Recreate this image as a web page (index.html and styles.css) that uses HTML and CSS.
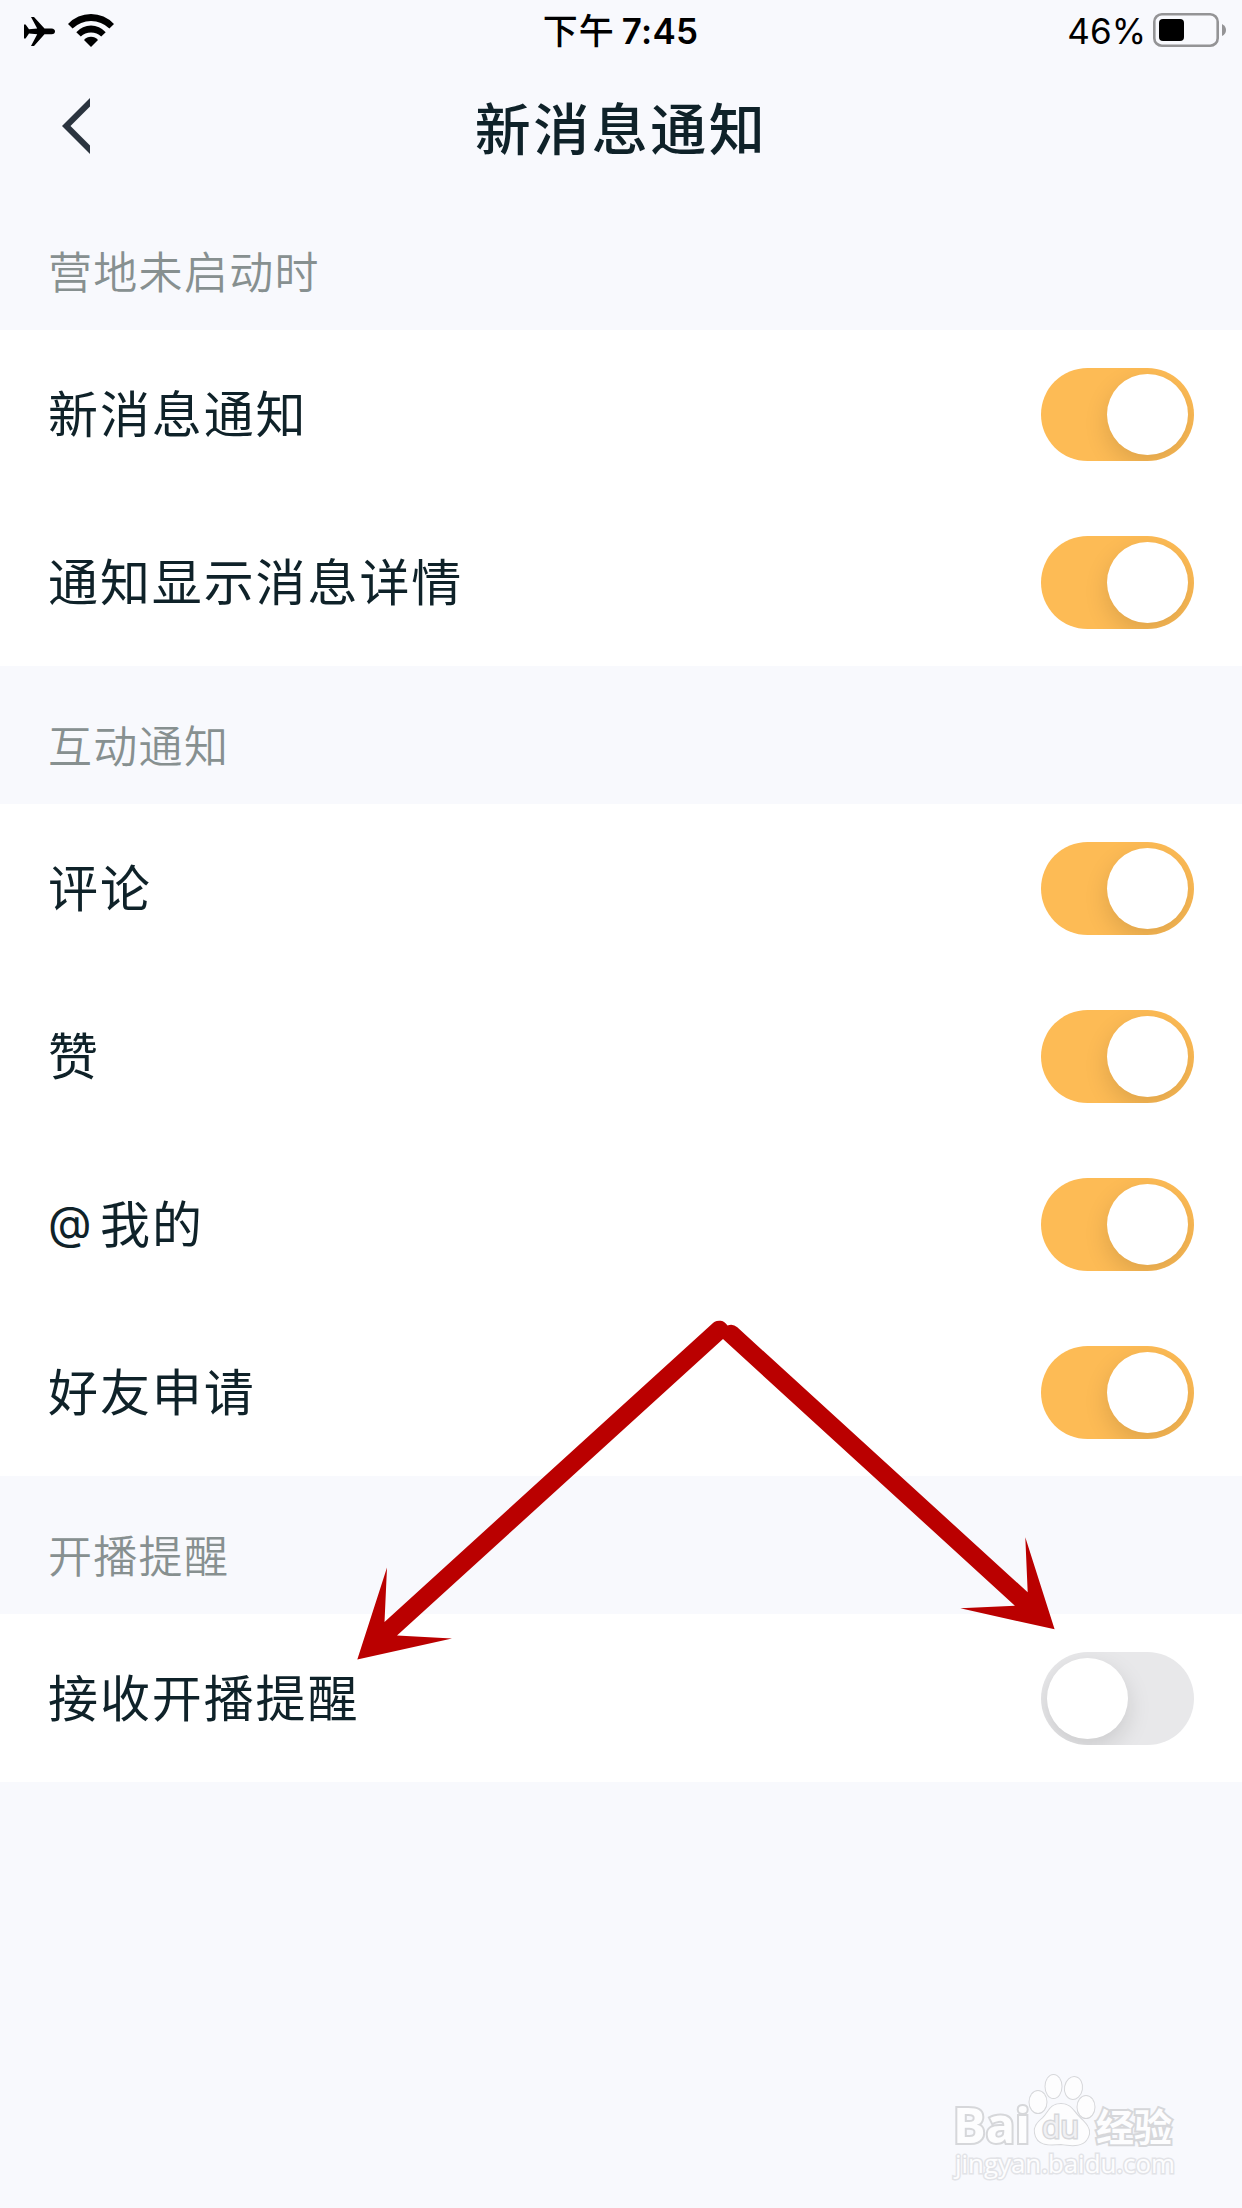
FILE: index.html
```html
<!DOCTYPE html>
<html lang="zh-CN">
<head>
<meta charset="utf-8">
<title>新消息通知</title>
<link rel="stylesheet" href="styles.css">
</head>
<body>
<div class="screen">
  <header class="status">
    <div class="status-left">
      <svg class="plane" viewBox="0 0 31 29"><path d="M0 7.500h1.600L5 12.300l8.200-.7L7 0h3L20.500 11.600h7Q31 12 31 14.400T27.500 17.200H20.500L10 29H7l6.200-11.700L5 16.500 1.600 21.500H0z"/></svg>
      <svg class="wifi" viewBox="0 0 46 33"><path d="M0 10Q9.500 0 23 0t23 10l-4.600 4.600Q33.500 7 23 7T4.600 14.600z"/><path d="M8.300 18.200Q14.500 11.500 23 11.500t14.700 6.700L33.200 22.600Q29 18.400 23 18.400t-10.200 4.200z"/><path d="M16 26q2.900-3.200 7-3.200t7 3.200l-7 7z"/></svg>
    </div>
    <div class="status-time"><span class="period">下午</span><span class="clock">7:45</span></div>
    <div class="status-right">
      <span class="percent">46%</span>
      <svg class="battery" viewBox="0 0 74 34"><rect x="1.300" y="1.300" width="63.400" height="31.400" rx="7.500" fill="none" stroke="#949496" stroke-width="2.600"/><rect x="6" y="6" width="25" height="22" rx="4"/><path d="M69 11q4 2 4 6t-4 6z" fill="#949496"/></svg>
    </div>
  </header>
  <nav class="navbar">
    <svg class="back" viewBox="0 0 28 56"><path d="M28 0v8.500L8.500 28 28 47.500V56L0 28z"/></svg>
    <h1 class="title">新消息通知</h1>
  </nav>
  <main>
    <h2 class="group-title">营地未启动时</h2>
    <section class="group">
      <div class="row"><span>新消息通知</span><i class="switch on"></i></div>
      <div class="row"><span>通知显示消息详情</span><i class="switch on"></i></div>
    </section>
    <h2 class="group-title">互动通知</h2>
    <section class="group">
      <div class="row"><span>评论</span><i class="switch on"></i></div>
      <div class="row"><span>赞</span><i class="switch on"></i></div>
      <div class="row"><span><b class="at">@</b>我的</span><i class="switch on"></i></div>
      <div class="row"><span>好友申请</span><i class="switch on"></i></div>
    </section>
    <h2 class="group-title">开播提醒</h2>
    <section class="group">
      <div class="row"><span>接收开播提醒</span><i class="switch"></i></div>
    </section>
  </main>
  <svg class="arrows" viewBox="350 1310 720 360">
    <path d="M713 1323A9.500 9.500 0 0 1 727.500 1325.500A9.500 9.500 0 0 1 737.300 1327.300L1027.700 1592.300 1025.300 1537.300 1054.600 1629.300 960.300 1608.300 1014.900 1605.700 723 1339 397 1635.500 452 1638.500 357.300 1659.500 387 1567.500 384.500 1622z"/>
  </svg>
  <svg class="watermark" viewBox="0 0 270 140">
    <g class="ink">
      <text class="brand" x="23" y="93" textLength="77" lengthAdjust="spacingAndGlyphs">Bai</text>
      <ellipse cx="108" cy="52" rx="8.500" ry="11"/>
      <ellipse cx="123.500" cy="36.500" rx="8" ry="11.500"/>
      <ellipse cx="143.500" cy="38" rx="8.500" ry="11" transform="rotate(10 143.500 38)"/>
      <ellipse cx="156" cy="57" rx="8.500" ry="11"/>
      <path d="M131 54c-11 0-12 8-18 14-6 5-9 9-8 15 2 13 15 12 26 11 12 2 25 3 28-10 1-7-5-12-10-17-6-6-8-13-18-13z"/>
      <text class="du" x="112" y="88" textLength="37" lengthAdjust="spacingAndGlyphs">du</text>
      <text class="cn" x="166" y="91" textLength="76" lengthAdjust="spacingAndGlyphs">经验</text>
      <text class="url" x="25" y="123" textLength="220" lengthAdjust="spacingAndGlyphs">jingyan.baidu.com</text>
    </g>
  </svg>
</div>
</body>
</html>
```
FILE: styles.css
```css
* { box-sizing: border-box; margin: 0; padding: 0; }
body { background: #f8f9fd; }
svg { display: block; }
.screen {
  position: relative;
  width: 1242px;
  height: 2208px;
  overflow: hidden;
  background: #f8f9fd;
  color: #0f2229;
  font-family: "Noto Sans CJK SC", sans-serif;
}
.status {
  display: grid;
  grid-template-columns: 1fr auto 1fr;
  align-items: center;
  height: 60px;
  padding: 0 15px 0 24px;
  color: #000;
}
.status-left { display: flex; align-items: center; gap: 13px; }
.plane { width: 31px; height: 29px; margin-top: 3px; }
.wifi { width: 46px; height: 33px; }
.status-time { display: flex; align-items: center; gap: 7px; padding-right: 10px; height: 60px; line-height: 57px; }
.period { height: 60px; font-size: 35px; letter-spacing: 1px; font-weight: 500; }
.clock { height: 60px; font: 600 35px/63px Inter, sans-serif; letter-spacing: 0.300px; }
.status-right { display: flex; align-items: center; justify-content: flex-end; gap: 7px; }
.percent { height: 60px; font: 400 35px/63px Inter, sans-serif; }
.battery { width: 74px; height: 34px; }
.navbar {
  display: grid;
  grid-template-columns: 62px 1fr 62px;
  align-items: center;
  height: 132px;
}
.back { width: 28px; height: 56px; margin: 0 0 0 62px; fill: #2b343f; }
.title { text-align: center; font-size: 56px; font-weight: 500; letter-spacing: 2.500px; line-height: 132px; }
.group-title {
  height: 138px;
  padding: 9px 0 0 48px;
  color: #879090;
  font-size: 44px;
  font-weight: 350;
  letter-spacing: 1.300px;
  line-height: 138px;
}
.group { background: #fff; }
.row {
  display: flex;
  align-items: center;
  justify-content: space-between;
  height: 168px;
  padding: 0 48px;
  font-size: 50px;
  letter-spacing: 1.900px;
}
.row span { line-height: 80px; padding-bottom: 6px; }
.at {
  display: inline-block;
  width: 52px;
  font: 400 45px/60px Inter, sans-serif;
  letter-spacing: 0;
  vertical-align: 4px;
}
.switch {
  width: 153px;
  height: 93px;
  padding: 6px;
  border-radius: 47px;
  overflow: hidden;
  background: #e8e8ea;
}
.switch::before {
  content: "";
  display: block;
  width: 81px;
  height: 81px;
  border-radius: 50%;
  background: #fff;
  box-shadow: 0 9px 24px rgba(0, 0, 0, 0.13);
}
.switch.on { background: #fdbb55; }
.switch.on::before { margin-left: auto; }
.arrows {
  position: absolute;
  left: 350px;
  top: 1310px;
  width: 720px;
  height: 360px;
  fill: #ba0000;
}
.watermark {
  position: absolute;
  right: 42px;
  bottom: 18px;
  width: 270px;
  height: 140px;
}
.ink { fill: #fdfdfe; stroke: #d6d7da; stroke-width: 2px; paint-order: stroke; }
.brand { font: 700 48px "Open Sans", sans-serif; stroke-width: 4px; }
.du { font: 400 31px "Open Sans", sans-serif; fill: #f0f0f3; stroke-width: 3px; }
.cn { font: 700 38px "Noto Sans CJK SC", sans-serif; stroke-width: 4px; }
.url { font: 400 26px "Open Sans", sans-serif; stroke-width: 3px; stroke: #e2e3e7; }
```
